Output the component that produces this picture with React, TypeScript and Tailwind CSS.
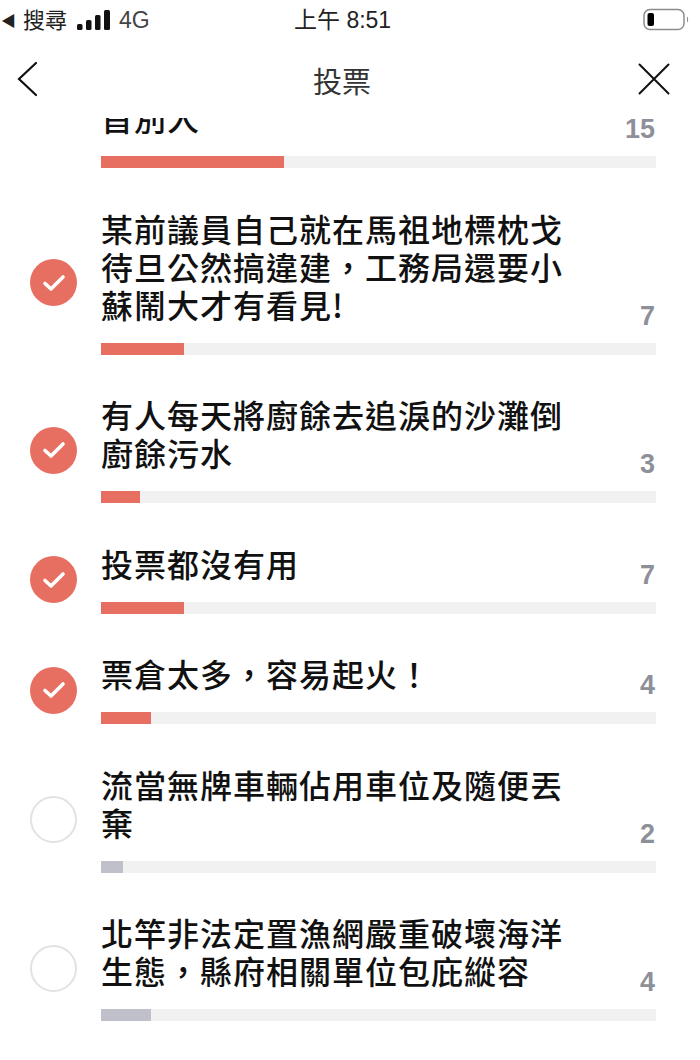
const options = [
  { lines: ['首別人'], count: 15, width: 183, checked: true, noCircle: true },
  { lines: ['某前議員自己就在馬祖地標枕戈', '待旦公然搞違建，工務局還要小', '蘇鬧大才有看見!'], count: 7, width: 83, checked: true },
  { lines: ['有人每天將廚餘去追淚的沙灘倒', '廚餘污水'], count: 3, width: 39, checked: true },
  { lines: ['投票都沒有用'], count: 7, width: 83, checked: true },
  { lines: ['票倉太多，容易起火！'], count: 4, width: 50, checked: true },
  { lines: ['流當無牌車輛佔用車位及隨便丟', '棄'], count: 2, width: 22, checked: false },
  { lines: ['北竿非法定置漁網嚴重破壞海洋', '生態，縣府相關單位包庇縱容'], count: 4, width: 50, checked: false },
]

function Bar({ width, checked }: { width: number; checked: boolean }) {
  return (
    <div className="h-3 w-[555px] bg-[#f1f1f2]">
      <div className={`h-full ${checked ? 'bg-[#e76f61]' : 'bg-[#c0c0ca]'}`} style={{ width }} />
    </div>
  )
}

function StatusBar() {
  return (
    <div className="relative flex h-10 items-center font-['Liberation_Sans','Noto_Sans_CJK_TC',sans-serif] text-[22px] text-[#222]">
      <span className="ml-px text-[15px] leading-none">◀</span>
      <span className="ml-[7px]">搜尋</span>
      <svg className="ml-[10px] -mt-[1px]" width="34" height="20" viewBox="0 0 34 20" fill="#111">
        <rect x="0" y="14" width="5.5" height="6" rx="1.5" />
        <rect x="9" y="10" width="5.5" height="10" rx="1.5" />
        <rect x="18" y="5" width="5.5" height="15" rx="1.5" />
        <rect x="27" y="0" width="6" height="20" rx="1.5" />
      </svg>
      <span className="ml-[8px] text-[23px] text-[#444]">4G</span>
      <span className="absolute left-[294px] top-[7px] text-[23px] leading-[26px]">上午 8:51</span>
      <svg className="absolute left-[643px] top-[8px]" width="48" height="24" viewBox="0 0 48 24" fill="none">
        <rect x="1" y="1.5" width="40" height="20" rx="6" stroke="#8c8c8c" strokeWidth="1.5" />
        <rect x="4.5" y="5" width="6.5" height="13" rx="2" fill="#000" />
        <path d="M44 8.5c1.5.5 1.5 5.5 0 6z" fill="#8c8c8c" />
      </svg>
    </div>
  )
}

function NavBar() {
  return (
    <div className="flex h-[78px] items-center justify-between pl-[17px] pr-[30px]">
      <svg width="21" height="36" viewBox="0 0 21 36" fill="none" stroke="#111" strokeWidth="2.2" strokeLinecap="round">
        <path d="M19 2 2 18l17 16" />
      </svg>
      <span className="pl-[8px] pt-[2px] font-['Noto_Sans_CJK_TC',sans-serif] text-[29px] leading-none text-[#333]">投票</span>
      <svg width="32" height="32" viewBox="0 0 32 32" fill="none" stroke="#111" strokeWidth="2" strokeLinecap="round">
        <path d="M1.5 1.5l29 29M30.5 1.5l-29 29" />
      </svg>
    </div>
  )
}

function Circle({ checked, hidden }: { checked: boolean; hidden?: boolean }) {
  if (hidden) return <div className="h-[47px] w-[47px] shrink-0" />
  if (!checked) {
    return <div className="h-[47px] w-[47px] shrink-0 rounded-full border-2 border-[#e2e2e4]" />
  }
  return (
    <div className="flex h-[47px] w-[47px] shrink-0 items-center justify-center rounded-full bg-[#e76f61]">
      <svg width="24" height="18" viewBox="0 0 24 18" fill="none" stroke="#fff" strokeWidth="3.6" strokeLinecap="round" strokeLinejoin="round">
        <path d="M3 9.5l6 5.5L21 3" />
      </svg>
    </div>
  )
}

export default function App() {
  return (
    <div className="flex h-[1060px] w-[700px] flex-col overflow-hidden bg-white">
      <StatusBar />
      <NavBar />
      <div className="flex-1 overflow-hidden">
        {/* list is scrolled, first row is cut by the header */}
        <div className="-mt-[18px] flex flex-col gap-[42.5px] pl-[30px] font-['Noto_Sans_CJK_TC',sans-serif]">
          {options.map((o, i) => (
            <div key={i} className="flex items-center gap-[24px]">
              <Circle checked={o.checked} hidden={o.noCircle} />
              <div className="flex flex-col gap-[18px]">
                <div className="flex w-[555px] items-end justify-between">
                  <p className="-mt-[2px] mb-[2px] text-[32px] leading-[38px] font-medium tracking-[1px] text-[#111]">
                    {o.lines.map((l, j) => (
                      <span key={j} className="block">{l}</span>
                    ))}
                  </p>
                  <span className="-mb-[6px] mr-px font-['Liberation_Sans',sans-serif] text-[27px] leading-[30px] font-bold text-[#8e9099]">{o.count}</span>
                </div>
                <Bar width={o.width} checked={o.checked} />
              </div>
            </div>
          ))}
        </div>
      </div>
    </div>
  )
}
